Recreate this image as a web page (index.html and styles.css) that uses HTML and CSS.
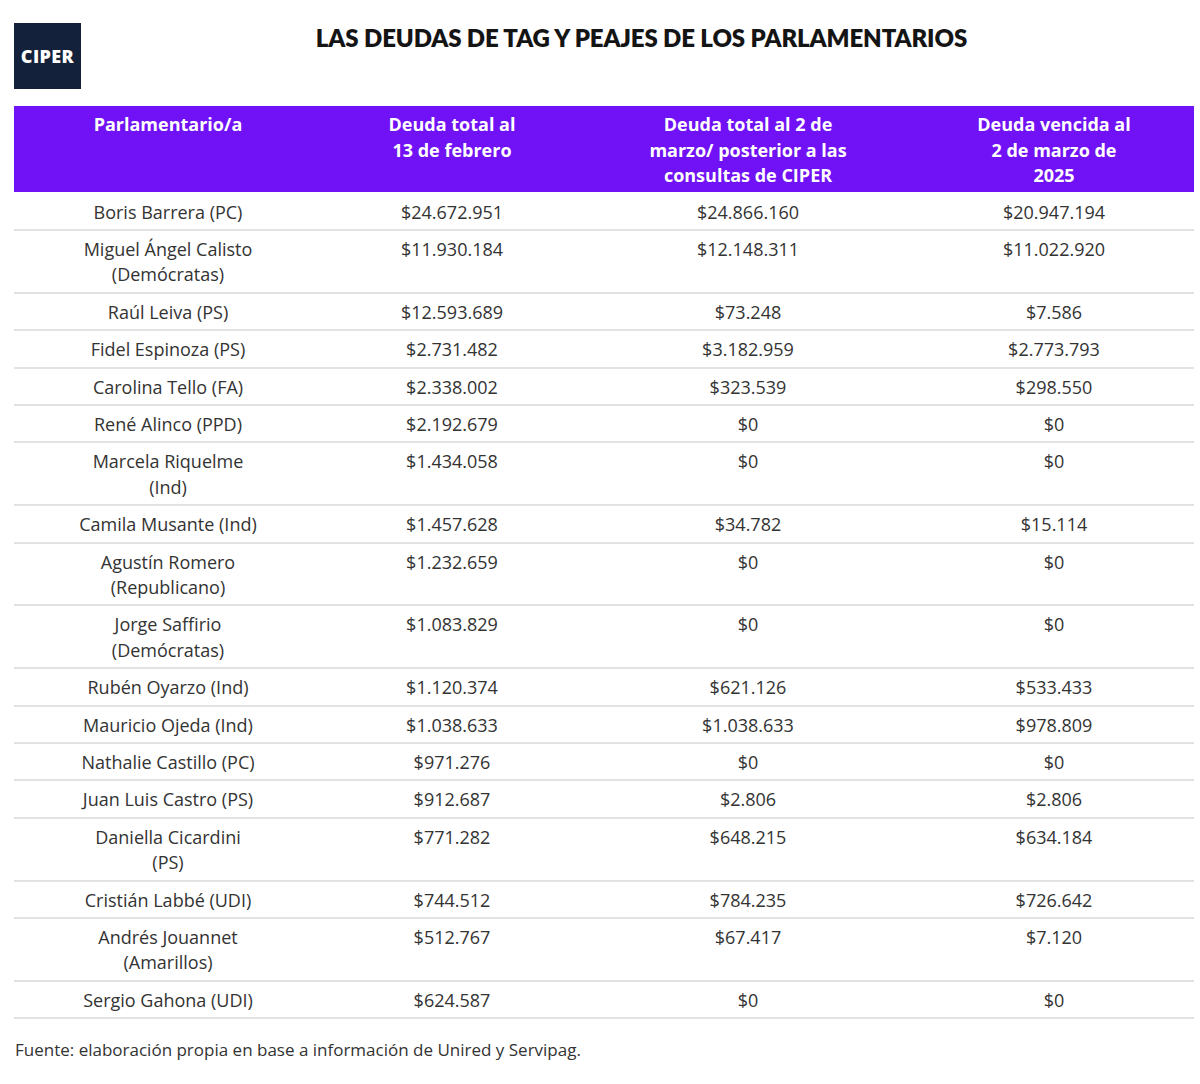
FILE: index.html
```html
<!DOCTYPE html>
<html lang="es">
<head>
<meta charset="utf-8">
<title>Las deudas de TAG y peajes de los parlamentarios</title>
<link rel="stylesheet" href="styles.css">
</head>
<body>
<div class="page">
  <header class="top">
    <div class="logo"><span>CIPER</span></div>
    <h1 class="title">LAS DEUDAS DE TAG Y PEAJES DE LOS PARLAMENTARIOS</h1>
  </header>
  <table class="debts">
    <colgroup>
      <col class="c1"><col class="c2"><col class="c3"><col class="c4">
    </colgroup>
    <thead>
      <tr>
        <th>Parlamentario/a</th>
        <th>Deuda total al<br>13 de febrero</th>
        <th>Deuda total al 2 de<br>marzo/ posterior a las<br>consultas de CIPER</th>
        <th>Deuda vencida al<br>2 de marzo de<br>2025</th>
      </tr>
    </thead>
    <tbody>
      <tr class="first"><td>Boris Barrera (PC)</td><td>$24.672.951</td><td>$24.866.160</td><td>$20.947.194</td></tr>
      <tr><td>Miguel Ángel Calisto<br>(Demócratas)</td><td>$11.930.184</td><td>$12.148.311</td><td>$11.022.920</td></tr>
      <tr><td>Raúl Leiva (PS)</td><td>$12.593.689</td><td>$73.248</td><td>$7.586</td></tr>
      <tr><td>Fidel Espinoza (PS)</td><td>$2.731.482</td><td>$3.182.959</td><td>$2.773.793</td></tr>
      <tr><td>Carolina Tello (FA)</td><td>$2.338.002</td><td>$323.539</td><td>$298.550</td></tr>
      <tr><td>René Alinco (PPD)</td><td>$2.192.679</td><td>$0</td><td>$0</td></tr>
      <tr><td>Marcela Riquelme<br>(Ind)</td><td>$1.434.058</td><td>$0</td><td>$0</td></tr>
      <tr><td>Camila Musante (Ind)</td><td>$1.457.628</td><td>$34.782</td><td>$15.114</td></tr>
      <tr><td>Agustín Romero<br>(Republicano)</td><td>$1.232.659</td><td>$0</td><td>$0</td></tr>
      <tr><td>Jorge Saffirio<br>(Demócratas)</td><td>$1.083.829</td><td>$0</td><td>$0</td></tr>
      <tr><td>Rubén Oyarzo (Ind)</td><td>$1.120.374</td><td>$621.126</td><td>$533.433</td></tr>
      <tr><td>Mauricio Ojeda (Ind)</td><td>$1.038.633</td><td>$1.038.633</td><td>$978.809</td></tr>
      <tr><td>Nathalie Castillo (PC)</td><td>$971.276</td><td>$0</td><td>$0</td></tr>
      <tr><td>Juan Luis Castro (PS)</td><td>$912.687</td><td>$2.806</td><td>$2.806</td></tr>
      <tr><td>Daniella Cicardini<br>(PS)</td><td>$771.282</td><td>$648.215</td><td>$634.184</td></tr>
      <tr><td>Cristián Labbé (UDI)</td><td>$744.512</td><td>$784.235</td><td>$726.642</td></tr>
      <tr><td>Andrés Jouannet<br>(Amarillos)</td><td>$512.767</td><td>$67.417</td><td>$7.120</td></tr>
      <tr><td>Sergio Gahona (UDI)</td><td>$624.587</td><td>$0</td><td>$0</td></tr>
    </tbody>
  </table>
  <p class="source">Fuente: elaboración propia en base a información de Unired y Servipag.</p>
</div>
</body>
</html>
```

FILE: styles.css
```css
* { box-sizing: border-box; }
html, body { margin: 0; padding: 0; background: #ffffff; }
body { font-family: "Open Sans", "Lato", "Liberation Sans", sans-serif; color: #333333; }
.page { padding: 23px 6px 0 14px; width: 1200px; }
.top { display: flex; align-items: flex-start; height: 83px; }
.logo {
  width: 67px; height: 66px; background: #14213a;
  display: flex; align-items: center; justify-content: center;
}
.logo span { color: #ffffff; font-weight: 800; font-size: 18px; letter-spacing: 0.4px; }
.title {
  flex: 1; margin: 0; text-align: center;
  font-family: "Lato", "Open Sans", sans-serif;
  font-size: 24px; font-weight: 800; color: #141414; line-height: 30px;
  padding-left: 8px; letter-spacing: -0.1px;
}
.debts { width: 1180px; border-collapse: collapse; table-layout: fixed; }
.c1 { width: 308px; } .c2 { width: 260px; } .c3 { width: 332px; } .c4 { width: 280px; }
.debts th {
  background: #7111f6; color: #ffffff; font-weight: 700; font-size: 18px;
  line-height: 25.5px; padding: 6px 2px 3px; vertical-align: top; text-align: center;
}
.debts td {
  font-size: 18px; line-height: 25.4px; padding: 6px 4px 4px; text-align: center;
  vertical-align: top; border-bottom: 2px solid #e2e2e2; color: #333333;
}
.debts .first td { padding-top: 8px; }
.source { margin: 19px 0 0 1px; font-size: 17px; color: #333333; }
```
